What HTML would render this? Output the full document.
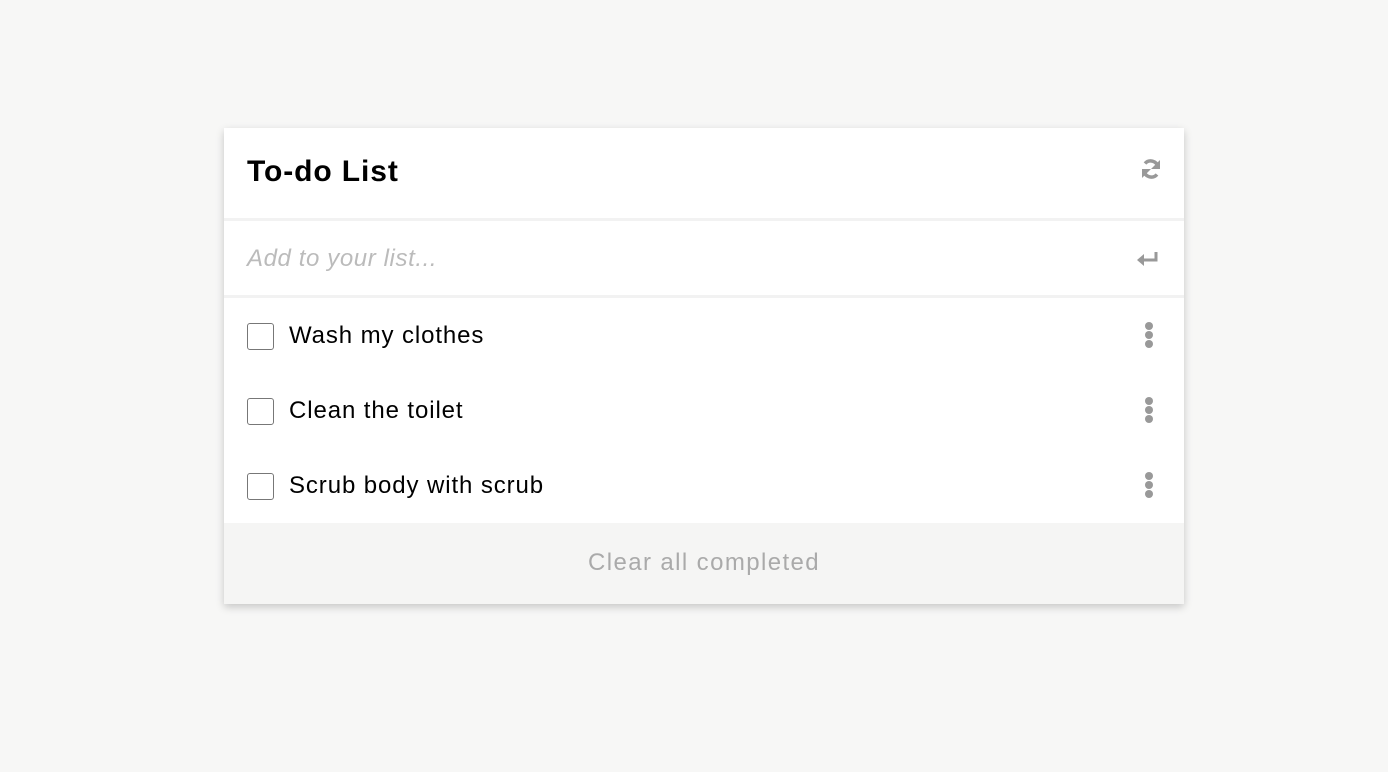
<!DOCTYPE html>
<html><head><style>
body{margin:0;background:#f7f7f6;width:1388px;height:772px;font-family:"Liberation Sans",sans-serif;position:relative}
.card{position:absolute;left:224px;top:128px;width:960px;height:476px;background:#fff;box-shadow:0 3px 8px rgba(0,0,0,.2)}
.hd{height:90px;border-bottom:3px solid #f2f2f2;position:relative}
.hd h1{margin:0;position:absolute;left:23px;top:27px;font-size:30px;font-weight:bold;letter-spacing:0.9px;color:#000}
.in{height:74px;border-bottom:3px solid #f2f2f2;position:relative}
.in span{position:absolute;left:23px;top:24px;font-size:24px;font-style:italic;color:#bbb;letter-spacing:0.6px}
.it{height:75px;position:relative}
.cb{position:absolute;left:23px;top:25px;width:27px;height:27px;border:1.5px solid #777;border-radius:3px;box-sizing:border-box}
.it span{position:absolute;left:65px;top:24px;font-size:24px;color:#000;letter-spacing:0.9px}
.dots{position:absolute;left:921px;top:24px;width:8px}
.dots i{display:block;width:8px;height:8px;border-radius:50%;background:#999;margin-bottom:1px}
.ft{position:absolute;left:0;top:395px;width:960px;height:81px;background:#f5f5f4;text-align:center;line-height:80px;font-size:24px;color:#aaa;letter-spacing:1.4px}
svg{position:absolute}
</style></head><body>
<div class="card">
<div class="hd"><h1>To-do List</h1>
<svg style="left:915px;top:29px" width="24" height="24" viewBox="0 0 24 24" fill="none"><path d="M19 10A7.5 7.5 0 0 0 6 6.5" stroke="#999" stroke-width="3.5"/><path d="M5 14a7.5 7.5 0 0 0 13 3.5" stroke="#999" stroke-width="3.5"/><path d="M21 3v9h-9z" fill="#999"/><path d="M3 21v-9h9z" fill="#999"/></svg>
</div>
<div class="in"><span>Add to your list...</span>
<svg style="left:912px;top:30px" width="24" height="16" viewBox="0 0 24 16"><path d="M20 1v8H7" stroke="#999" stroke-width="3" fill="none"/><path d="M1 9l7-6v12z" fill="#999"/></svg>
</div>
<div class="it"><div class="cb"></div><span>Wash my clothes</span><div class="dots"><i></i><i></i><i></i></div></div>
<div class="it"><div class="cb"></div><span>Clean the toilet</span><div class="dots"><i></i><i></i><i></i></div></div>
<div class="it"><div class="cb"></div><span>Scrub body with scrub</span><div class="dots"><i></i><i></i><i></i></div></div>
<div class="ft">Clear all completed</div>
</div>
</body></html>
